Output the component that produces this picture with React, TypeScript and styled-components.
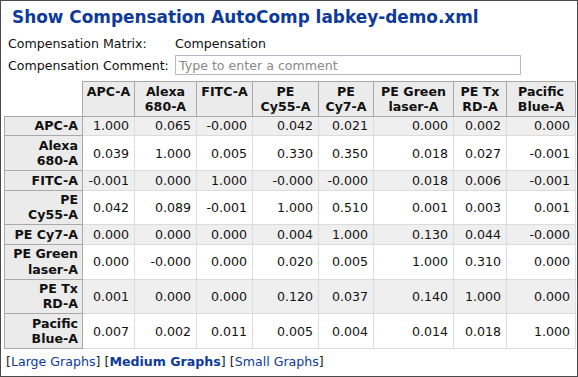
import styled, { createGlobalStyle } from "styled-components";

const GlobalStyle = createGlobalStyle`
	html, body {
		margin: 0;
		padding: 0;
		background: #ffffff;
	}
	body {
		font-family: "DejaVu Sans", Verdana, sans-serif;
		font-size: 12.6px;
		color: #000000;
	}
`;

const Page = styled.div`
	box-sizing: border-box;
	width: 578px;
	height: 377px;
	border: 1px solid #4a4a4a;
	padding: 0 2px 0 3px;
	overflow: hidden;
`;

const Title = styled.h1`
	margin: 0;
	padding: 5px 0 0 8px;
	font-size: 16.9px;
	line-height: 22px;
	font-weight: bold;
	color: #0e3a9a;
`;

const Info = styled.div`
	display: grid;
	grid-template-columns: 167px 346px;
	grid-auto-rows: 22px;
	align-items: center;
	margin-top: 4px;
	padding-left: 4px;
`;

const Label = styled.span`
	white-space: nowrap;
	color: #111;
`;

const CommentInput = styled.input`
	box-sizing: border-box;
	width: 346px;
	height: 20px;
	margin: 0;
	border: 1px solid #b5b8c8;
	padding: 0 3px;
	font-family: "DejaVu Sans", Verdana, sans-serif;
	font-size: 12.6px;
	color: #000;
	background: #fff;

	&::placeholder {
		color: #8a8a8a;
	}
`;

const Matrix = styled.table`
	margin-top: 5px;
	border-collapse: collapse;
	table-layout: fixed;
	width: 571px;
	line-height: 15.3px;
`;

const Corner = styled.th`
	padding: 0;
	border: none;
	background: transparent;
`;

const ColHead = styled.th`
	border: 1px solid #a9a9a9;
	background: #ebebeb;
	padding: 1.6px 3px;
	vertical-align: top;
	text-align: center;
	font-weight: bold;
	color: #111;
`;

const RowHead = styled.th`
	border: 1px solid #a9a9a9;
	background: #ebebeb;
	padding: 1.6px 4px 1.6px 2px;
	vertical-align: middle;
	text-align: right;
	font-weight: bold;
	color: #111;
`;

const Cell = styled.td<{ $alt: boolean }>`
	border: 1px solid #dcdcdc;
	background: ${(p) => (p.$alt ? "#efefef" : "#ffffff")};
	padding: 1.6px 5px 1.6px 2px;
	vertical-align: middle;
	text-align: right;
	color: #111;
`;

const Links = styled.div`
	margin-top: 5px;
	padding-left: 2px;
	line-height: 15px;
	color: #222;
`;

const GraphLink = styled.a<{ $current?: boolean }>`
	color: #0e3a9a;
	text-decoration: none;
	font-weight: ${(p) => (p.$current ? "bold" : "normal")};
	cursor: pointer;
`;

const channels = [
	{ head: ["APC-A"], row: ["APC-A"], width: 52 },
	{ head: ["Alexa", "680-A"], row: ["Alexa", "680-A"], width: 62 },
	{ head: ["FITC-A"], row: ["FITC-A"], width: 56 },
	{ head: ["PE", "Cy55-A"], row: ["PE", "Cy55-A"], width: 66 },
	{ head: ["PE", "Cy7-A"], row: ["PE Cy7-A"], width: 55 },
	{ head: ["PE Green", "laser-A"], row: ["PE Green", "laser-A"], width: 80 },
	{ head: ["PE Tx", "RD-A"], row: ["PE Tx", "RD-A"], width: 53 },
	{ head: ["Pacific", "Blue-A"], row: ["Pacific", "Blue-A"], width: 69 },
];

const values = [
	["1.000", "0.065", "-0.000", "0.042", "0.021", "0.000", "0.002", "0.000"],
	["0.039", "1.000", "0.005", "0.330", "0.350", "0.018", "0.027", "-0.001"],
	["-0.001", "0.000", "1.000", "-0.000", "-0.000", "0.018", "0.006", "-0.001"],
	["0.042", "0.089", "-0.001", "1.000", "0.510", "0.001", "0.003", "0.001"],
	["0.000", "0.000", "0.000", "0.004", "1.000", "0.130", "0.044", "-0.000"],
	["0.000", "-0.000", "0.000", "0.020", "0.005", "1.000", "0.310", "0.000"],
	["0.001", "0.000", "0.000", "0.120", "0.037", "0.140", "1.000", "0.000"],
	["0.007", "0.002", "0.011", "0.005", "0.004", "0.014", "0.018", "1.000"],
];

const lines = (parts: string[]) =>
	parts.map((p, i) => (
		<span key={i}>
			{i > 0 && <br />}
			{p}
		</span>
	));

const App = () => {
	return (
		<>
			<GlobalStyle />
			<Page>
				<Title>Show Compensation AutoComp labkey-demo.xml</Title>
				<Info>
					<Label>Compensation Matrix:</Label>
					<Label>Compensation</Label>
					<Label>Compensation Comment:</Label>
					<CommentInput placeholder="Type to enter a comment" />
				</Info>
				<Matrix>
					<colgroup>
						<col style={{ width: 78 }} />
						{channels.map((c, i) => (
							<col key={i} style={{ width: c.width }} />
						))}
					</colgroup>
					<thead>
						<tr>
							<Corner />
							{channels.map((c, i) => (
								<ColHead key={i}>{lines(c.head)}</ColHead>
							))}
						</tr>
					</thead>
					<tbody>
						{values.map((row, r) => (
							<tr key={r}>
								<RowHead>{lines(channels[r].row)}</RowHead>
								{row.map((v, c) => (
									<Cell key={c} $alt={r % 2 === 0}>
										{v}
									</Cell>
								))}
							</tr>
						))}
					</tbody>
				</Matrix>
				<Links>
					[<GraphLink>Large Graphs</GraphLink>] [
					<GraphLink $current>Medium Graphs</GraphLink>] [
					<GraphLink>Small Graphs</GraphLink>]
				</Links>
			</Page>
		</>
	);
};

export default App;
